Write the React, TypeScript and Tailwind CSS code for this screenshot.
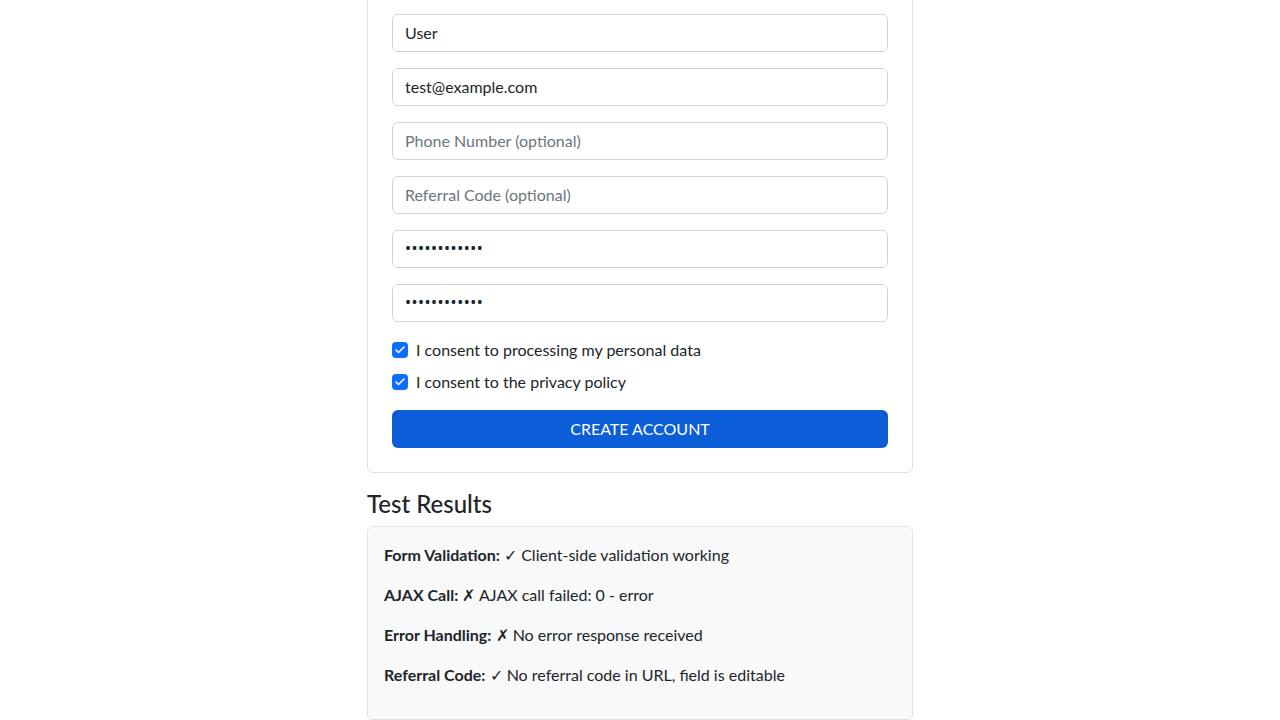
import { Check } from 'lucide-react'

const FONT = { fontFamily: 'Lato, "Noto Sans", sans-serif' }

const fields = [
  { type: 'text', value: 'User', placeholder: 'Full Name' },
  { type: 'email', value: 'test@example.com', placeholder: 'Email' },
  { type: 'tel', value: '', placeholder: 'Phone Number (optional)' },
  { type: 'text', value: '', placeholder: 'Referral Code (optional)' },
  { type: 'password', value: 'password1234', placeholder: 'Password' },
  { type: 'password', value: 'password1234', placeholder: 'Confirm Password' },
]

const results = [
  { label: 'Form Validation:', text: '✓ Client-side validation working' },
  { label: 'AJAX Call:', text: '✗ AJAX call failed: 0 - error' },
  { label: 'Error Handling:', text: '✗ No error response received' },
  { label: 'Referral Code:', text: '✓ No referral code in URL, field is editable' },
]

function Consent({ label }: { label: string }) {
  return (
    <label className="flex items-center gap-2 h-6 mb-2 text-base text-[#212529]">
      <span className="w-4 h-4 rounded-[4px] bg-[#0d6efd] flex items-center justify-center">
        <Check size={12} strokeWidth={3} color="#fff" />
      </span>
      {label}
    </label>
  )
}

export default function App() {
  return (
    <div className="min-h-screen bg-white text-[#212529]" style={FONT}>
      <div className="w-[546px] mx-auto">
        {/* Register card */}
        <div className="-mt-[11px] border border-[#dfdfdf] rounded-md bg-white p-6">
          <form onSubmit={(e) => e.preventDefault()}>
            {fields.map((f, i) => (
              <input
                key={i}
                type={f.type}
                defaultValue={f.value}
                placeholder={f.placeholder}
                className={
                  f.type === 'password'
                    ? 'block w-full h-[38px] mb-4 px-3 pb-[2px] border border-[#ced4da] rounded-md text-base text-[#212529] outline-none font-["Noto_Sans"] tracking-[0.5px]'
                    : 'block w-full h-[38px] mb-4 px-3 pb-[2px] border border-[#ced4da] rounded-md text-base text-[#212529] placeholder:text-[#6c757d] outline-none'
                }
              />
            ))}
            <Consent label="I consent to processing my personal data" />
            <Consent label="I consent to the privacy policy" />
            <button
              type="submit"
              className="mt-2 w-full h-[38px] rounded-md bg-[#0b5ed7] text-white text-base uppercase"
            >
              Create Account
            </button>
          </form>
        </div>

        {/* Results */}
        <h4 className="mt-4 mb-2 h-[29px] text-2xl font-medium leading-[29px]">Test Results</h4>
        <div className="border border-[#dee2e6] rounded-md bg-[#f8f9fa] p-4">
          {results.map((r) => (
            <p key={r.label} className="mb-4 h-6 leading-6">
              <strong className="font-bold">{r.label}</strong> {r.text}
            </p>
          ))}
        </div>
      </div>
    </div>
  )
}
